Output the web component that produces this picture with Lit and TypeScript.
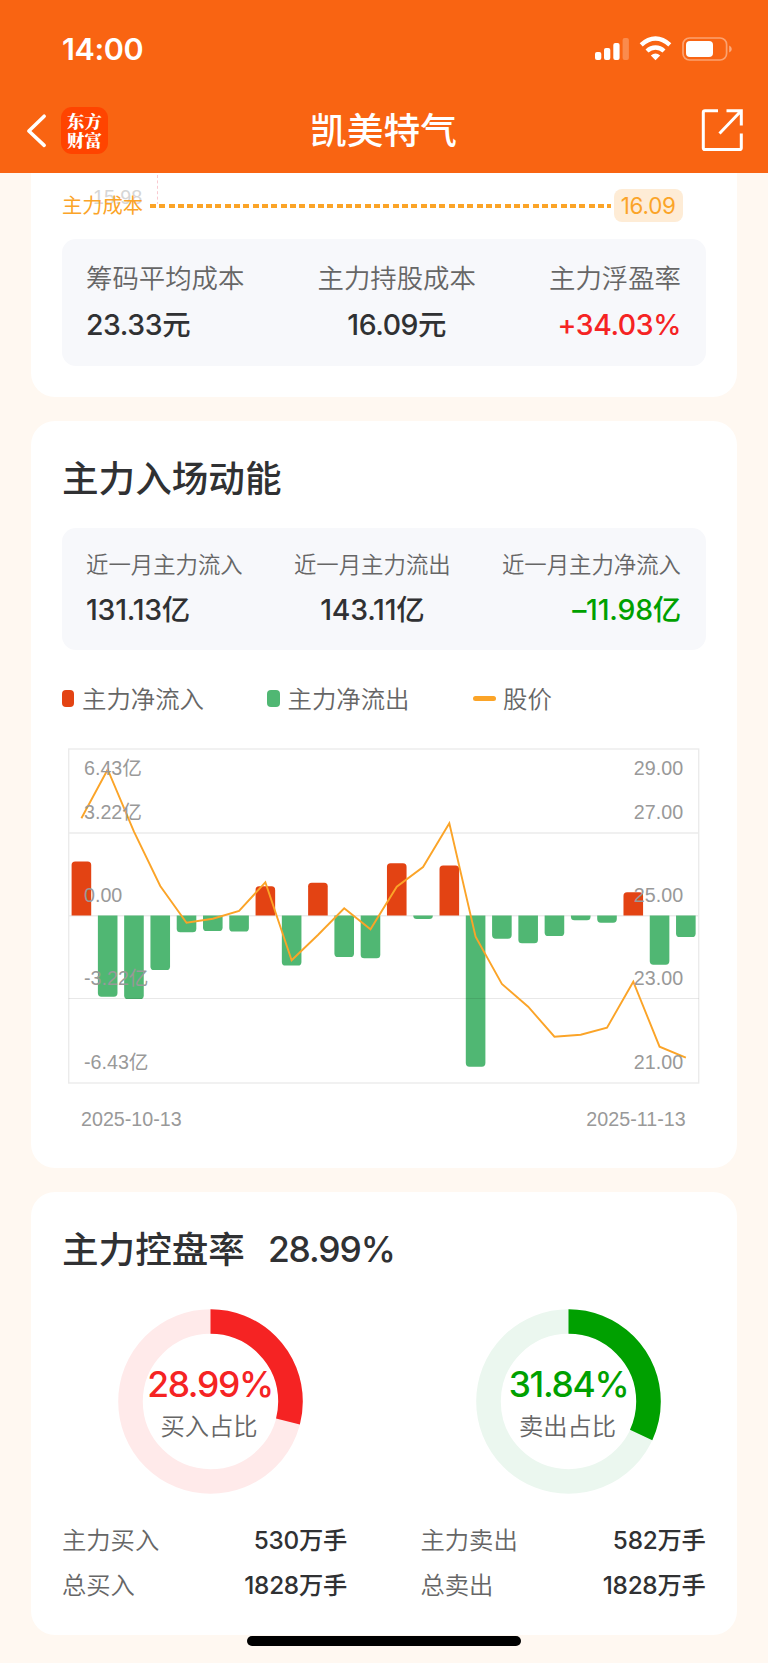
import { LitElement, html, svg, css } from "lit";
import { customElement } from "lit/decorators.js";

const ends = [861.5, 996.7, 999, 970, 932.3, 931, 931.5, 886.3, 965.5, 882.7, 957, 958.3, 863.2, 919, 865.5, 1066.7, 938.7, 943.3, 936, 920.3, 922.7, 892.3, 964.7, 937];
const prices = [818.3, 769.5, 831.7, 886, 922.7, 918.7, 911, 882.3, 960.3, 935, 908.3, 929.3, 886.7, 867, 823.3, 936.7, 984, 1006.7, 1036.7, 1034.7, 1027.7, 981.7, 1046.7, 1057.7];
const ZERO = 915.5;
const cx = (i: number) => 81.4 + i * 26.28;

const bar = (end: number, i: number) => {
  const l = cx(i) - 9.8, r = cx(i) + 9.8, h = Math.abs(end - ZERO), q = Math.min(3.6, h);
  const s = end < ZERO ? 1 : -1;
  return svg`<path fill=${end < ZERO ? "#e34313" : "#50b773"} d=${`M${l} ${ZERO}V${end + s * q}Q${l} ${end} ${l + q} ${end}H${r - q}Q${r} ${end} ${r} ${end + s * q}V${ZERO}Z`}></path>`;
};

@customElement("flow-chart")
export class FlowChart extends LitElement {
  static styles = css`
    :host { display: block; }
    svg { display: block; }
    text { font: 19.7px "Liberation Sans", "Noto Sans CJK SC", sans-serif; fill: #999; }
    .end { text-anchor: end; }
  `;
  render() {
    const ys = [774.5, 818.5, 901.9, 985, 1068.5];
    const left = ["6.43亿", "3.22亿", "0.00", "-3.22亿", "-6.43亿"];
    const right = ["29.00", "27.00", "25.00", "23.00", "21.00"];
    return html`<svg width="644" height="400" viewBox="62 740 644 400">
      <rect x="68.7" y="749" width="630" height="334" fill="none" stroke="#ebebeb" stroke-width="1.4"></rect>
      <path d="M68.7 833H698.7M68.7 915.8H698.7" stroke="#ebebeb" stroke-width="1.6"></path>
      ${ends.map(bar)}
      <path d="M68.7 998.5H698.7" stroke="#000" stroke-opacity=".09" stroke-width="1.2"></path>
      <polyline points=${prices.map((y, i) => `${cx(i)},${y}`).join(" ")} fill="none" stroke="#fba428" stroke-width="1.9"></polyline>
      ${left.map((t, i) => svg`<text x="84" y=${ys[i]}>${t}</text>`)}
      ${right.map((t, i) => svg`<text class="end" x="683.1" y=${ys[i]}>${t}</text>`)}
      <text x="81" y="1125.7">2025-10-13</text>
      <text class="end" x="685.6" y="1125.7">2025-11-13</text>
    </svg>`;
  }
}

@customElement("ratio-ring")
export class RatioRing extends LitElement {
  static properties = { value: {}, label: {}, color: {}, track: {} };
  declare value: string; declare label: string; declare color: string; declare track: string;
  static styles = css`
    :host { display: grid; width: 185px; height: 185px; font-family: Inter, "Noto Sans CJK SC", sans-serif; }
    svg, .in { grid-area: 1 / 1; }
    .in { display: flex; flex-direction: column; align-items: center; padding-top: 54px; white-space: nowrap; }
    .v { font-size: 35.4px; line-height: 44px; height: 44px; font-weight: 450; letter-spacing: -1.3px; }
    .l { font-size: 24.3px; line-height: 36px; height: 36px; color: #666; font-weight: 350; margin-top: 1px; margin-right: 2px; }
  `;
  render() {
    const c = 2 * Math.PI * 80;
    const part = (parseFloat(this.value) / 100) * c;
    return html`<svg viewBox="0 0 185 185" width="185" height="185">
      <circle cx="92.5" cy="92.5" r="80" fill="none" stroke=${this.track} stroke-width="24.6"></circle>
      <circle cx="92.5" cy="92.5" r="80" fill="none" stroke=${this.color} stroke-width="24.6" stroke-dasharray="${part} ${c}" transform="rotate(-90 92.5 92.5)"></circle>
    </svg><div class="in"><div class="v" style="color:${this.color}">${this.value}</div><div class="l">${this.label}</div></div>`;
  }
}

@customElement("app-root")
export class AppRoot extends LitElement {
  static styles = css`
    :host { display: block; width: 768px; height: 1663px; overflow: hidden; background: #fff8f1; color: #303133; font-family: Inter, "Noto Sans CJK SC", sans-serif; }
    * { box-sizing: border-box; }
    header { height: 173px; background: #f96412; color: #fff; display: flex; flex-direction: column; }
    .status { height: 88px; display: flex; justify-content: space-between; padding: 30px 36px 0 62px; }
    .status svg { margin-top: 4px; }
    .time { font-size: 30.5px; font-weight: 600; line-height: 37px; letter-spacing: -0.4px; }
    .nav { height: 85px; display: grid; grid-template-columns: 108px 1fr 108px; align-items: center; }
    .left { display: flex; align-items: center; gap: 13px; padding-left: 26px; }
    .logo { flex: none; width: 47px; height: 47px; border-radius: 11px; background: #ff4400; display: flex; flex-direction: column; align-items: center; justify-content: center; font: 800 17.4px/19px "Noto Serif CJK SC", "Noto Sans CJK SC", sans-serif; padding-bottom: 1px; white-space: nowrap; }
    .name { font-size: 36.7px; line-height: 54px; text-align: center; font-weight: 500; white-space: nowrap; padding-right: 1px; }
    .share { justify-self: end; margin: 0 24px 1px 0; display: flex; }
    main { padding: 0 31px; display: flex; flex-direction: column; gap: 24px; }
    .card { background: #fff; border-radius: 24px; padding: 0 31px; }
    .c1 { height: 224px; border-radius: 0 0 24px 24px; }
    .c2 { height: 747px; }
    .c3 { height: 442.5px; }
    .cost { height: 66px; display: flex; align-items: center; position: relative; }
    .cost > * { position: relative; }
    .cost .ghost { position: absolute; left: 31px; top: 12px; font: 19.7px/24px "Liberation Sans", sans-serif; color: #d6d6d6; }
    .cost .tick { position: absolute; left: 95px; top: 2px; height: 30px; border-left: 1px dashed #f9c9cf; }
    .orange { color: #fba428; font-size: 20.3px; line-height: 30px; white-space: nowrap; width: 82px; }
    .dash { margin-left: 5.5px; width: 461.5px; height: 4px; background: repeating-linear-gradient(90deg, #fba428 0 6px, #fff 6px 9.33px); }
    .tag { height: 33px; width: 68.5px; margin: 0 0 1px 3px; border-radius: 8px; background: #feecd6; color: #fba428; font-size: 22.4px; line-height: 33px; text-align: center; letter-spacing: -0.2px; }
    .box { background: #f7f8fb; border-radius: 14px; padding: 0 25px 0 24px; display: flex; justify-content: space-between; }
    .cell { display: flex; flex-direction: column; white-space: nowrap; align-items: center; }
    .cell:first-child { align-items: flex-start; }
    .cell:last-child { align-items: flex-end; }
    .k { color: #666; font-weight: 350; }
    .val { font-size: 28.4px; line-height: 40px; height: 40px; font-weight: 500; letter-spacing: -0.4px; }
    .b1 { height: 127px; padding-top: 20px; }
    .b1 .k { font-size: 26.4px; line-height: 38px; height: 38px; margin-bottom: 8px; }
    .b2 { height: 122px; padding-top: 20px; }
    .b2 .k { font-size: 22.4px; line-height: 34px; height: 34px; margin-bottom: 7px; }
    .b2 .val { letter-spacing: -0.2px; padding-top: 0.5px; }
    .red { color: #f52323; }
    .green { color: #00a000; }
    h2 { margin: 0; font-size: 36.6px; line-height: 54px; height: 54px; font-weight: 500; white-space: nowrap; display: flex; }
    .c2 h2 { margin: 31px 0 22px; }
    .legend { display: grid; grid-template-columns: 205px 206px 1fr; height: 38px; margin-top: 30px; font-size: 24.4px; line-height: 38px; color: #666; font-weight: 350; }
    .legend div { display: flex; align-items: center; gap: 8px; }
    .legend i { width: 12px; height: 17px; border-radius: 4px; margin-bottom: 1px; }
    .legend .r { background: #e34313; }
    .legend .g { background: #50b773; width: 13px; margin-right: -0.5px; }
    .legend .o { background: #fba428; width: 23px; height: 5px; border-radius: 2.5px; margin-right: -1px; }
    flow-chart { margin-top: 22px; }
    .c3 h2 { padding-top: 31px; height: 84px; }
    .c3 h2 span { font-size: 35.4px; margin-left: 23px; letter-spacing: -1.1px; font-weight: 450; }
    .cols { display: grid; grid-template-columns: 285px 285px; gap: 73.5px; padding-top: 33px; }
    .rings { display: flex; flex-direction: column; }
    ratio-ring { margin-left: 55.5px; margin-bottom: 27.5px; }
    .row { display: flex; justify-content: space-between; height: 45px; line-height: 36px; font-size: 24.3px; }
    .row b { font-weight: 500; letter-spacing: -0.25px; }
    .home { width: 274px; height: 10px; border-radius: 5px; background: #000; margin: 1.5px auto 0; }
  `;
  render() {
    const cell = (k: string, v: string, c = "") => html`<div class="cell"><div class="k">${k}</div><div class="val ${c}">${v}</div></div>`;
    const row = (k: string, v: string) => html`<div class="row"><span class="k">${k}</span><b>${v}</b></div>`;
    return html`
      <header>
        <div class="status">
          <div class="time">14:00</div>
          <svg width="138" height="30" viewBox="594 34 138 30" fill="#fff">
            <rect x="595" y="52" width="6.3" height="8" rx="2"></rect>
            <rect x="604" y="48" width="6.3" height="12" rx="2"></rect>
            <rect x="613.3" y="43" width="6.3" height="17" rx="2"></rect>
            <rect x="622.6" y="38" width="6.3" height="22" rx="2" opacity=".25"></rect>
            <g fill="none" stroke="#fff" stroke-width="4.4">
              <path d="M641.2 44.9Q648 38.5 655.5 38.5T669.8 44.9"></path>
              <path d="M647 51Q650.8 47.5 655.5 47.5T664 51"></path>
            </g>
            <path d="M650.8 55.5Q655.5 51.4 660.2 55.5L655.5 60.2Z"></path>
            <rect x="683" y="38" width="43.6" height="22" rx="6.5" fill="none" stroke="#fff" stroke-opacity=".4" stroke-width="1.7"></rect>
            <rect x="686" y="41" width="27" height="16" rx="4"></rect>
            <path d="M729.2 45.5Q731.8 46.5 731.8 49T729.2 52.5Z" opacity=".45"></path>
          </svg>
        </div>
        <div class="nav">
          <div class="left">
            <svg width="23" height="36" viewBox="26 113 23 36"><path d="M45 115.5L29 131L45 146" fill="none" stroke="#fff" stroke-width="3.7" stroke-linecap="round" stroke-linejoin="round"></path></svg>
            <div class="logo"><span>东方</span><span>财富</span></div>
          </div>
          <div class="name">凯美特气</div>
          <svg class="share" width="44" height="44" viewBox="700 108 44 44" fill="none" stroke="#fff" stroke-width="3"><path d="M718 110.8H705Q703.3 110.8 703.3 112.5V148Q703.3 149.6 705 149.6H739.6Q741.3 149.6 741.3 148V133.5M726.5 110.8H741.3V125.5M741 111L719.5 133.5"></path></svg>
        </div>
      </header>
      <main>
        <section class="card c1">
          <div class="cost">
            <span class="ghost">15.98</span><span class="tick"></span>
            <span class="orange">主力成本</span><span class="dash"></span><span class="tag">16.09</span>
          </div>
          <div class="box b1">${cell("筹码平均成本", "23.33元")}${cell("主力持股成本", "16.09元")}${cell("主力浮盈率", "+34.03%", "red")}</div>
        </section>
        <section class="card c2">
          <h2>主力入场动能</h2>
          <div class="box b2">${cell("近一月主力流入", "131.13亿")}${cell("近一月主力流出", "143.11亿")}${cell("近一月主力净流入", "–11.98亿", "green")}</div>
          <div class="legend"><div><i class="r"></i>主力净流入</div><div><i class="g"></i>主力净流出</div><div><i class="o"></i>股价</div></div>
          <flow-chart></flow-chart>
        </section>
        <section class="card c3">
          <h2>主力控盘率<span>28.99%</span></h2>
          <div class="cols">
            <div class="rings"><ratio-ring value="28.99%" label="买入占比" color="#f52323" track="#ffeaea"></ratio-ring>${row("主力买入", "530万手")}${row("总买入", "1828万手")}</div>
            <div class="rings"><ratio-ring value="31.84%" label="卖出占比" color="#00a000" track="#ebf7ef"></ratio-ring>${row("主力卖出", "582万手")}${row("总卖出", "1828万手")}</div>
          </div>
        </section>
      </main>
      <div class="home"></div>`;
  }
}
